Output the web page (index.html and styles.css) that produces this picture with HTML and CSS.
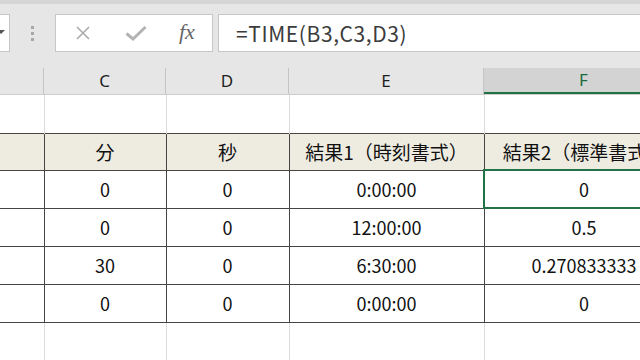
FILE: index.html
```html
<!DOCTYPE html>
<html lang="ja">
<head>
    <meta charset="UTF-8">
    <title>TIME関数</title>
    <link rel="stylesheet" href="styles.css">
</head>
<body>
    <div class="app">
        <!-- 数式バー -->
        <div class="toolbar">
            <div class="name-box"><span class="arrow"></span></div>
            <div class="grip"><i></i><i></i><i></i></div>
            <div class="buttons">
                <span class="btn-icon btn-cancel">
                    <svg width="16" height="16" viewBox="0 0 16 16"><path d="M2 2 L14 14 M14 2 L2 14" stroke="#ababab" stroke-width="1.6" fill="none"/></svg>
                </span>
                <span class="btn-icon btn-enter">
                    <svg width="22" height="16" viewBox="0 0 22 16"><path d="M1.5 8.5 L8 14 L20.5 2" stroke="#b3b3b3" stroke-width="3" fill="none" stroke-linejoin="miter"/></svg>
                </span>
                <span class="btn-icon fx">fx</span>
            </div>
            <div class="formula">=TIME(B3,C3,D3)</div>
        </div>

        <!-- 列見出し -->
        <div class="col-heads">
            <div class="col-head"></div>
            <div class="col-head">C</div>
            <div class="col-head">D</div>
            <div class="col-head">E</div>
            <div class="col-head active">F</div>
        </div>

        <div class="sheet">
            <table class="grid">
                <colgroup>
                    <col class="w-b"><col class="w-c"><col class="w-d"><col class="w-e"><col class="w-f">
                </colgroup>
                <tr class="row-blank">
                    <td></td><td></td><td></td><td></td><td></td>
                </tr>
                <tr class="row-head">
                    <td></td><td>分</td><td>秒</td><td>結果1（時刻書式）</td><td>結果2（標準書式）</td>
                </tr>
                <tr class="row-data">
                    <td></td><td>0</td><td>0</td><td>0:00:00</td><td class="selected">0</td>
                </tr>
                <tr class="row-data">
                    <td></td><td>0</td><td>0</td><td>12:00:00</td><td>0.5</td>
                </tr>
                <tr class="row-data">
                    <td></td><td>30</td><td>0</td><td>6:30:00</td><td>0.270833333</td>
                </tr>
                <tr class="row-data">
                    <td></td><td>0</td><td>0</td><td>0:00:00</td><td>0</td>
                </tr>
                <tr class="row-blank">
                    <td></td><td></td><td></td><td></td><td></td>
                </tr>
            </table>
        </div>
    </div>
</body>
</html>
```

FILE: styles.css
```css
*{
    box-sizing: border-box;
    margin: 0;
    padding: 0;
}
body{
    background-color: #ffffff;
    font-family: "Noto Sans CJK JP", "Noto Sans", sans-serif;
    overflow: hidden;
}
.app{
    width: 640px;
    height: 360px;
    overflow: hidden;
}

/* 数式バー */
.toolbar{
    height: 68px;
    background-color: #e6e6e6;
    border-top: 4px solid #d5d5d5;
    padding-top: 10px;
    display: flex;
    align-items: flex-start;
}
.name-box{
    width: 10px;
    height: 38px;
    background-color: #fff;
    border: 1px solid #c6c6c6;
    border-left: 0;
    position: relative;
    overflow: hidden;
}
.arrow{
    position: absolute;
    left: -3px;
    top: 15px;
    border-left: 4px solid transparent;
    border-right: 4px solid transparent;
    border-top: 4px solid #555;
}
.grip{
    width: 4px;
    margin: 12px 0 0 21px;
    display: flex;
    flex-direction: column;
    gap: 3px;
}
.grip i{
    width: 3px;
    height: 3px;
    background-color: #a8a8a8;
}
.buttons{
    margin-left: 20px;
    width: 158px;
    height: 38px;
    background-color: #fff;
    border: 1px solid #c6c6c6;
    display: flex;
    align-items: center;
    padding-left: 19px;
}
.btn-icon{
    flex-shrink: 0;
    display: flex;
    align-items: center;
}
.btn-cancel{
    width: 50px;
}
.btn-enter{
    width: 52px;
}
.fx{
    font-family: "Liberation Serif", serif;
    font-style: italic;
    font-size: 22px;
    color: #666;
    padding-left: 2px;
    margin-top: -2px;
}
.formula{
    flex: 1;
    margin-left: 5px;
    margin-right: -10px;
    height: 38px;
    background-color: #fff;
    border: 1px solid #c6c6c6;
    padding-left: 17px;
    font-size: 21px;
    letter-spacing: 0.6px;
    line-height: 36px;
    color: #3c3c3c;
}

/* 列見出し */
.col-heads{
    display: grid;
    grid-template-columns: 44px 122px 123px 195px 200px;
    height: 27px;
    background-color: #e6e6e6;
    border-bottom: 1px solid #cdcdcd;
}
.col-head{
    border-right: 1px solid #c4c4c4;
    font-family: "Noto Sans", sans-serif;
    font-size: 17px;
    line-height: 26px;
    text-align: center;
    color: #1e1e1e;
}
.col-head.active{
    background-color: #d3d3d3;
    border-bottom: 2px solid #217346;
    color: #1b6a3e;
    line-height: 24px;
}

/* シート */
.grid{
    border-collapse: collapse;
    table-layout: fixed;
    width: 684px;
}
.w-b{ width: 44px; }
.w-c{ width: 122px; }
.w-d{ width: 123px; }
.w-e{ width: 195px; }
.w-f{ width: 200px; }
.grid td{
    font-size: 18px;
    text-align: center;
    color: #111;
    padding: 0;
    white-space: nowrap;
    overflow: hidden;
}
.row-blank td{
    height: 38px;
    border-right: 1px solid #dcdcdc;
}
.row-head td{
    height: 37px;
    font-size: 19px;
    background-color: #eeece1;
    border: 1px solid #454545;
    border-left: 0;
}
.row-data td{
    height: 38px;
    border: 1px solid #454545;
    border-left: 0;
}
.selected{
    outline: 2px solid #217346;
    outline-offset: -1px;
}
```
